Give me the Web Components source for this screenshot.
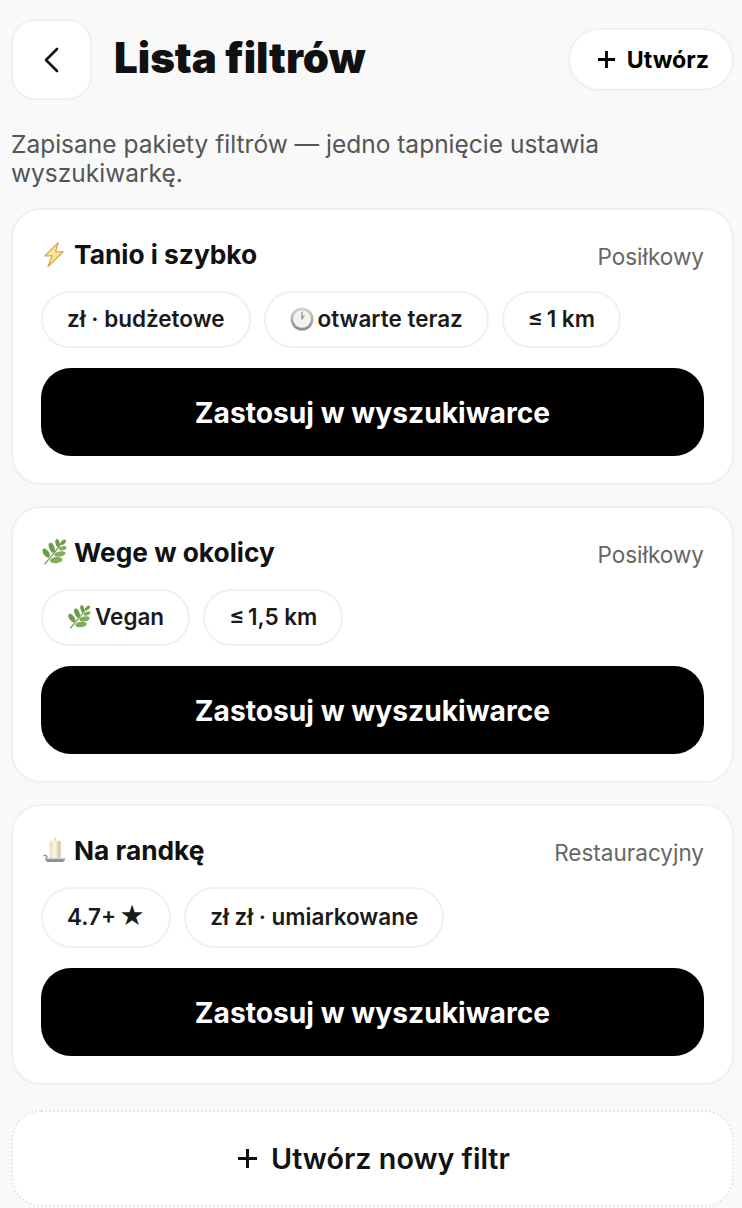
<!DOCTYPE html>
<html lang="pl">
<head>
<meta charset="utf-8">
<title>Lista filtrów</title>
<style>
  html, body { margin: 0; background: #f9f9f9; }
  body { font-family: Inter, "Noto Sans", sans-serif; color: #111; }
</style>
</head>
<body>
<filtry-app></filtry-app>

<script>
// emoji are drawn by hand, no colour emoji font here
const IKONY = {
    bolt: `<svg viewBox="0 0 24 24" width="100%" height="100%">
        <path d="M15.800 1.500 3.500 13.800h6.700L6.500 23.500 20.500 10h-7L15.800 1.500z" fill="#fae39a" stroke="#d8ab48" stroke-width="1.200" stroke-linejoin="round"/>
        </svg>`,
    herb: `<svg viewBox="0 0 24 24" width="100%" height="100%">
        <path d="M3.500 23C8 18 14 11 19.500 3" fill="none" stroke="#6d9a4a" stroke-width="1.200" stroke-linecap="round"/>
        <g fill="#699d48">
            <ellipse cx="4.800" cy="13" rx="4.800" ry="2.500" transform="rotate(55 4.800 13)"/>
            <ellipse cx="10" cy="8" rx="4.800" ry="2.400" transform="rotate(68 10 8)"/>
            <ellipse cx="15.300" cy="3.800" rx="3.800" ry="1.900" transform="rotate(75 15.300 3.800)"/>
            <ellipse cx="20.500" cy="3" rx="3" ry="1.700" transform="rotate(-40 20.500 3)"/>
        </g>
        <g fill="#7fae5a">
            <ellipse cx="14" cy="19.500" rx="5.800" ry="2.800" transform="rotate(-6 14 19.500)"/>
            <ellipse cx="17.500" cy="13.800" rx="5.200" ry="2.400" transform="rotate(-10 17.500 13.800)"/>
            <ellipse cx="20" cy="8.500" rx="3.600" ry="1.900" transform="rotate(-15 20 8.500)"/>
        </g></svg>`,
    clock: `<svg viewBox="0 0 24 24" width="100%" height="100%">
        <defs><linearGradient id="t" x1="0" y1="0" x2="0" y2="1"><stop offset="0" stop-color="#d6d6d6"/><stop offset="1" stop-color="#8a8a8a"/></linearGradient></defs>
        <circle cx="12" cy="12" r="11.500" fill="url(#t)"/>
        <circle cx="12" cy="12" r="8.800" fill="#f5f3ee"/>
        <path d="M12 12V5.200M12 12l2-3" stroke="#777" stroke-width="1" stroke-linecap="round" fill="none"/></svg>`,
    candle: `<svg viewBox="0 0 24 24" width="100%" height="100%">
        <defs><linearGradient id="w" x1="0" y1="0" x2="1" y2="0"><stop offset="0" stop-color="#f0dcbc"/><stop offset=".5" stop-color="#fcf6e8"/><stop offset="1" stop-color="#cdb692"/></linearGradient></defs>
        <path d="M13 0c1.400 1.500 1.500 3.200 0 4.500-1.400-1.300-1.300-3 0-4.500z" fill="#efdcae"/>
        <rect x="8" y="3.500" width="10" height="16.500" rx="1.300" fill="url(#w)"/>
        <path d="M2 17.500c1.500-1 3-.7 3.500.7.300 1-.7 1.800-1.700 1.500" fill="none" stroke="#8e8e8e" stroke-width="1.200"/>
        <path d="M4 19.500h18c.5 2-1 3.500-3 3.500H7c-2 0-3.500-1.500-3-3.500z" fill="#8d8d8d"/>
        <path d="M4.500 19.500h17v1h-17z" fill="#d4d4d4"/></svg>`
}

class IkonaEmoji extends HTMLElement {
    connectedCallback() {
        const shadow = this.attachShadow({ mode: 'open' })
        shadow.innerHTML = `
            <style>
                :host { display: inline-block; width: var(--rozmiar, 26px); height: var(--rozmiar, 26px); flex: none; }
            </style>
            ${IKONY[this.getAttribute("nazwa")]}
        `
    }
}
customElements.define("ikona-emoji", IkonaEmoji)

class FiltrChip extends HTMLElement {
    connectedCallback() {
        const shadow = this.attachShadow({ mode: 'open' })
        shadow.innerHTML = `
            <style>
                :host {
                    display: inline-flex;
                    align-items: center;
                    box-sizing: border-box;
                    min-height: 57px;
                    padding: 0 24px 2px;
                    gap: 4px;
                    background: #fff;
                    border: 2px solid #f0f0f0;
                    border-radius: 999px;
                    font-size: 22.500px;
                    font-weight: 600;
                    color: #1a1a1a;
                    white-space: nowrap;
                    --rozmiar: 24px;
                }
            </style>
            <slot></slot>
        `
    }
}
customElements.define("filtr-chip", FiltrChip)

class FiltrKarta extends HTMLElement {
    connectedCallback() {
        const shadow = this.attachShadow({ mode: 'open' })
        shadow.innerHTML = `
            <style>
                :host {
                    display: block;
                    box-sizing: border-box;
                    background: #fff;
                    border: 2px solid #f0f0f0;
                    border-radius: 30px;
                    padding: 28px 28px 27px;
                }
                .gora {
                    display: flex;
                    justify-content: space-between;
                    align-items: center;
                    height: 34px;
                }
                .nazwa {
                    display: flex;
                    align-items: center;
                    gap: 7px;
                    padding-bottom: 2px;
                    font-size: 26.300px;
                    font-weight: 700;
                    color: #111;
                }
                .typ { font-size: 22.500px; color: #666; padding-top: 2px; }
                .chipy { display: flex; gap: 13px; margin-top: 19px; }
                button {
                    display: block;
                    width: 100%;
                    height: 88px;
                    margin-top: 20px;
                    padding: 2px 0 0;
                    border: 0;
                    border-radius: 30px;
                    background: #000;
                    color: #fff;
                    font: 700 28.200px Inter, sans-serif;
                }
            </style>
            <div class="gora">
                <div class="nazwa"><slot name="ikona"></slot>${this.getAttribute("nazwa")}</div>
                <div class="typ">${this.getAttribute("typ")}</div>
            </div>
            <div class="chipy"><slot></slot></div>
            <button>Zastosuj w wyszukiwarce</button>
        `
    }
}
customElements.define("filtr-karta", FiltrKarta)

class NaglowekStrony extends HTMLElement {
    connectedCallback() {
        const shadow = this.attachShadow({ mode: 'open' })
        shadow.innerHTML = `
            <style>
                :host {
                    display: flex;
                    align-items: center;
                }
                .wstecz {
                    display: flex;
                    align-items: center;
                    justify-content: center;
                    box-sizing: border-box;
                    width: 81px;
                    height: 81px;
                    background: #fff;
                    border: 2px solid #f0f0f0;
                    border-radius: 24px;
                }
                h1 {
                    flex: 1;
                    margin: 0 0 4px 22px;
                    font-size: 42px;
                    font-weight: 900;
                    color: #111;
                }
                .utworz {
                    display: flex;
                    align-items: center;
                    gap: 12px;
                    box-sizing: border-box;
                    height: 63px;
                    padding: 0 23px 0 28px;
                    background: #fff;
                    border: 2px solid #f0f0f0;
                    border-radius: 999px;
                    font-size: 23.200px;
                    font-weight: 700;
                    color: #000;
                }
            </style>
            <div class="wstecz">
                <svg width="18" height="26" viewBox="0 0 18 26" fill="none" stroke="#111" stroke-width="2.600" stroke-linecap="round" stroke-linejoin="round"><path d="M14 2 3 13l11 11"/></svg>
            </div>
            <h1>Lista filtrów</h1>
            <div class="utworz">
                <svg width="17" height="17" viewBox="0 0 17 17" stroke="#000" stroke-width="2.800"><path d="M8.500 0v17M0 8.500h17"/></svg>
                Utwórz
            </div>
        `
    }
}
customElements.define("naglowek-strony", NaglowekStrony)

class FiltryApp extends HTMLElement {
    connectedCallback() {
        const shadow = this.attachShadow({ mode: 'open' })
        shadow.innerHTML = `
            <style>
                :host {
                    display: flex;
                    flex-direction: column;
                    box-sizing: border-box;
                    height: 1208px;
                    overflow: hidden;
                    padding: 19px 8px 0 11px;
                }
                p {
                    margin: 30px 0 20px;
                    font-size: 24.500px;
                    line-height: 29px;
                    color: #555;
                }
                .karty { display: flex; flex-direction: column; gap: 21px; }
                .nowy {
                    display: flex;
                    align-items: center;
                    justify-content: center;
                    gap: 14px;
                    box-sizing: border-box;
                    height: 97px;
                    flex: none;
                    margin-top: 25px;
                    padding-left: 3px;
                    background: #fff;
                    border: 2px dotted #e6e6e6;
                    border-radius: 30px;
                    font-size: 28.700px;
                    font-weight: 600;
                    color: #111;
                }
                .gwiazda { font-size: 25px; line-height: 1; margin-left: -1px; }
            </style>
            <naglowek-strony></naglowek-strony>
            <p>Zapisane pakiety filtrów — jedno tapnięcie ustawia wyszukiwarkę.</p>
            <div class="karty">
                <filtr-karta nazwa="Tanio i szybko" typ="Posiłkowy">
                    <ikona-emoji slot="ikona" nazwa="bolt"></ikona-emoji>
                    <filtr-chip>zł · budżetowe</filtr-chip>
                    <filtr-chip><ikona-emoji nazwa="clock"></ikona-emoji>otwarte teraz</filtr-chip>
                    <filtr-chip>≤&#8201;1 km</filtr-chip>
                </filtr-karta>
                <filtr-karta nazwa="Wege w okolicy" typ="Posiłkowy">
                    <ikona-emoji slot="ikona" nazwa="herb"></ikona-emoji>
                    <filtr-chip><ikona-emoji nazwa="herb"></ikona-emoji>Vegan</filtr-chip>
                    <filtr-chip>≤&#8201;1,5 km</filtr-chip>
                </filtr-karta>
                <filtr-karta nazwa="Na randkę" typ="Restauracyjny">
                    <ikona-emoji slot="ikona" nazwa="candle"></ikona-emoji>
                    <filtr-chip style="min-height:61px">4.7+ <span class="gwiazda">★</span></filtr-chip>
                    <filtr-chip style="min-height:61px">zł zł · umiarkowane</filtr-chip>
                </filtr-karta>
            </div>
            <div class="nowy">
                <svg width="19" height="19" viewBox="0 0 19 19" stroke="#111" stroke-width="3"><path d="M9.500 0v19M0 9.500h19"/></svg>
                Utwórz nowy filtr
            </div>
        `
    }
}
customElements.define("filtry-app", FiltryApp)
</script>
</body>
</html>
